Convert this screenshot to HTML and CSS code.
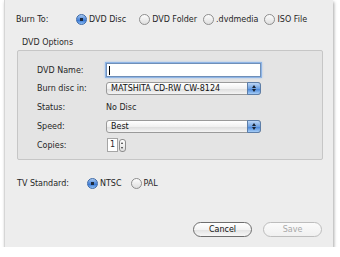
FILE: index.html
```html
<!DOCTYPE html>
<html lang="en">
  <head>
    <meta charset="UTF-8" />
    <title>Burn Options</title>
    <link rel="stylesheet" href="styles.css">
  </head>
  <body>
    <div class="sheet">
      <div class="row burn-row">
        <span class="label burn-label">Burn To:</span>
        <span class="radio on">DVD Disc</span>
        <span class="radio folder">DVD Folder</span>
        <span class="radio media">.dvdmedia</span>
        <span class="radio">ISO File</span>
      </div>

      <div class="group-title">DVD Options</div>
      <div class="group">
        <div class="field-row name-row">
          <span class="label field-label">DVD Name:</span>
          <span class="text-input"><span class="caret"></span></span>
        </div>
        <div class="field-row popup-row">
          <span class="label field-label">Burn disc in:</span>
          <span class="popup">MATSHITA CD-RW CW-8124<span class="popup-arrows"></span></span>
        </div>
        <div class="field-row status-row">
          <span class="label field-label">Status:</span>
          <span class="value">No Disc</span>
        </div>
        <div class="field-row speed-row">
          <span class="label field-label">Speed:</span>
          <span class="popup">Best<span class="popup-arrows"></span></span>
        </div>
        <div class="field-row copies-row">
          <span class="label field-label">Copies:</span>
          <span class="stepper-field">1</span>
          <span class="stepper"></span>
        </div>
      </div>

      <div class="row tv-row">
        <span class="label tv-label">TV Standard:</span>
        <span class="radio on ntsc">NTSC</span>
        <span class="radio">PAL</span>
      </div>

      <div class="actions">
        <button type="button" class="btn">Cancel</button>
        <button type="button" class="btn disabled">Save</button>
      </div>
    </div>
  </body>
</html>
```

FILE: styles.css
```css
/* General Reset */
* {
  margin: 0;
  padding: 0;
  box-sizing: border-box;
}

body {
  font-family: "DejaVu Sans", sans-serif;
  font-size: 8px;
  color: #262626;
  background: #fff;
}

.sheet {
  margin-left: 4px;
  width: 329px;
  height: 247px;
  padding: 12px 11px 0 11px;
  background: #ededed;
  border-left: 1px solid #d6d6d6;
  box-shadow: 1px 2px 3px rgba(0, 0, 0, 0.35);
}

.row {
  display: flex;
  align-items: center;
  height: 14px;
}

.label {
  flex: none;
}

.burn-label {
  width: 60px;
}

.radio {
  display: flex;
  align-items: center;
  white-space: nowrap;
}

.radio::before {
  content: "";
  width: 11px;
  height: 11px;
  margin-right: 2px;
  border-radius: 50%;
  border: 1px solid #8e8e8e;
  background: linear-gradient(#fdfdfd, #dedede);
  box-sizing: border-box;
}

.radio.on::before {
  border-color: #3d6aa8;
  background: radial-gradient(circle, #1c2a3e 0, #1c2a3e 1.6px, transparent 2px),
    linear-gradient(#a9c9f0, #3b7ad6 60%, #8fc0f5);
}

.burn-row .radio {
  margin-right: 13px;
}

.burn-row .folder {
  margin-right: 6px;
}

.burn-row .media {
  margin-right: 6px;
}

.group-title {
  height: 12px;
  line-height: 12px;
  margin: 11px 0 1px 6px;
  color: #2a2a2a;
}

.group {
  margin-left: 1px;
  width: 306px;
  height: 110px;
  padding: 12px 0 6px 19px;
  background: #e4e4e4;
  border: 1px solid #c6c6c6;
  border-radius: 2px;
}

.field-row {
  display: flex;
  align-items: center;
  height: 14px;
}

.field-label {
  width: 69px;
}

.popup-row {
  height: 13px;
  margin-top: 5px;
}

.status-row {
  margin-top: 5px;
}

.speed-row {
  height: 13px;
  margin-top: 6px;
}

.copies-row {
  margin-top: 5px;
}

.text-input {
  display: flex;
  align-items: center;
  width: 155px;
  height: 14px;
  padding-left: 2px;
  background: #fff;
  border: 1px solid #6f8fb8;
  box-shadow: 0 0 0 1px #8fb5e6, 0 0 2px 1px #a9c8ee;
}

.caret {
  width: 1px;
  height: 9px;
  background: #000;
}

.popup {
  position: relative;
  display: flex;
  align-items: center;
  width: 155px;
  height: 13px;
  padding-left: 4px;
  color: #111;
  border: 1px solid #9a9a9a;
  border-radius: 3px;
  background: linear-gradient(#ffffff, #f1f1f1 50%, #dcdcdc 51%, #f4f4f4);
  white-space: nowrap;
}

.popup-arrows {
  position: absolute;
  right: -1px;
  top: -1px;
  width: 14px;
  height: 13px;
  border: 1px solid #5d7ea8;
  border-radius: 0 3px 3px 0;
  background: linear-gradient(#bcd6f5, #6fa2e2 50%, #3f7fd6 51%, #a6cdf7);
}

.popup-arrows::before,
.popup-arrows::after {
  content: "";
  position: absolute;
  left: 4px;
  border-left: 2px solid transparent;
  border-right: 2px solid transparent;
}

.popup-arrows::before {
  top: 2px;
  border-bottom: 3px solid #1a2433;
}

.popup-arrows::after {
  bottom: 2px;
  border-top: 3px solid #1a2433;
}

.stepper-field {
  width: 11px;
  height: 14px;
  margin-left: 1px;
  padding-left: 2px;
  line-height: 12px;
  background: #fff;
  border: 1px solid #a5a5a5;
}

.stepper {
  position: relative;
  width: 7px;
  height: 13px;
  margin-left: 1px;
  border: 1px solid #8d8d8d;
  border-radius: 3px;
  background: linear-gradient(#fff, #dedede);
}

.stepper::before,
.stepper::after {
  content: "";
  position: absolute;
  left: 1px;
  border-left: 1.5px solid transparent;
  border-right: 1.5px solid transparent;
}

.stepper::before {
  top: 2px;
  border-bottom: 2px solid #333;
}

.stepper::after {
  bottom: 2px;
  border-top: 2px solid #333;
}

.tv-row {
  margin: 16px 0 0 1px;
}

.tv-label {
  width: 70px;
}

.tv-row .ntsc {
  margin-right: 9px;
}

.actions {
  display: flex;
  justify-content: flex-end;
  gap: 11px;
  margin-top: 32px;
}

.btn {
  width: 59px;
  height: 15px;
  font-family: inherit;
  font-size: 8px;
  color: #111;
  border: 1px solid #6e6e6e;
  border-radius: 8px;
  background: linear-gradient(#ffffff, #f3f3f3 50%, #e2e2e2 51%, #f7f7f7);
}

.btn.disabled {
  color: #a8a8a8;
  border-color: #bdbdbd;
  background: linear-gradient(#fbfbfb, #f0f0f0);
}
```
